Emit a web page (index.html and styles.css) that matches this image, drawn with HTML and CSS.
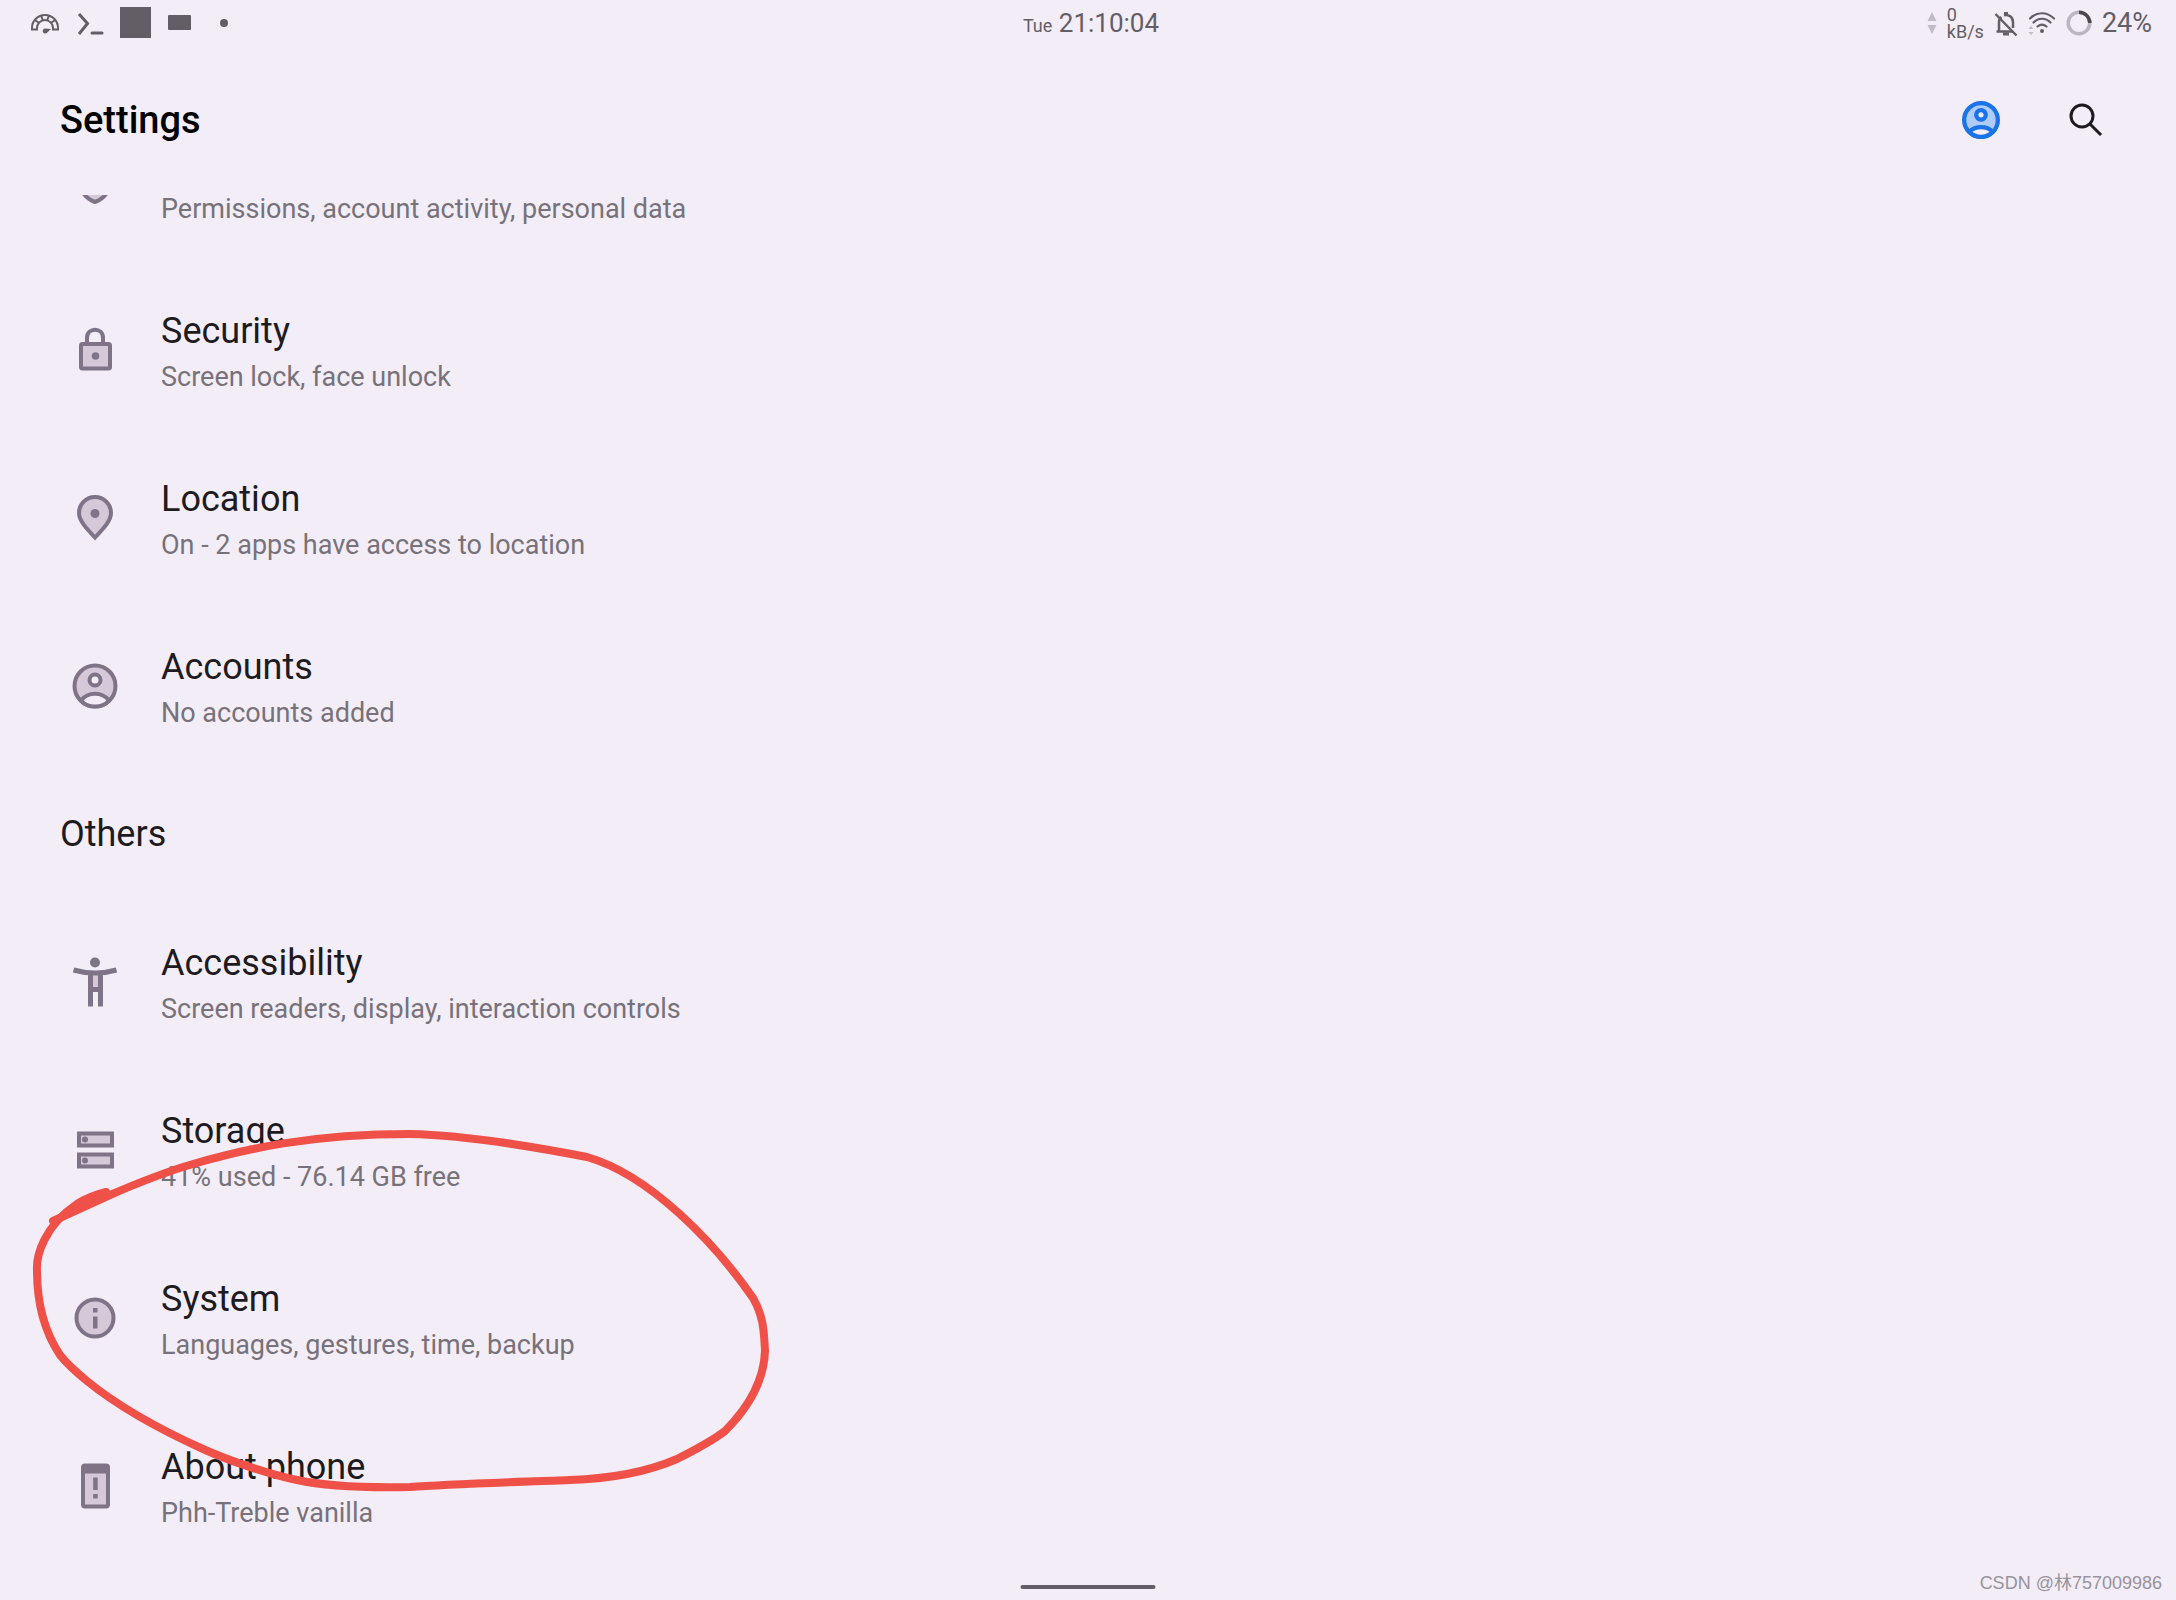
FILE: index.html
```
<!DOCTYPE html>
<html lang="en">

<head>
    <meta charset="UTF-8">
    <meta content="width=device-width, initial-scale=1.0" name="viewport">
    <title>Settings</title>
    <link rel="stylesheet" href="styles.css">
</head>

<body>
<div class="status-bar">
    <div class="status-left">
        <svg width="30" height="32" viewBox="0 0 30 32" fill="none" stroke="currentColor">
            <path d="M2 22.500V21a13 13 0 0 1 26 0v1.500h-5V21a8 8 0 0 0-16 0v1.500z" stroke-width="2"/>
            <path d="M5 13l4 3M11 8.500l2 5M19 8.500l-2 5M25 13l-4 3" stroke-width="2"/>
            <path d="M21 22l-6-.500c-3 .500-3 5 0 5 2 0 3-2 6-4.500z" fill="currentColor" stroke="none"/>
        </svg>
        <svg width="26" height="32" viewBox="0 0 26 32" fill="none" stroke="currentColor">
            <path d="M2 7l8.500 9.500L2 27" stroke-width="3"/>
            <path d="M15 26h10" stroke-width="3" stroke-linecap="round"/>
        </svg>
        <span class="square"></span>
        <span class="block"></span>
        <span class="dot"></span>
    </div>
    <div class="clock"><span class="day">Tue</span> 21:10:04</div>
    <div class="status-right">
        <svg class="faded" width="10" height="32" viewBox="0 0 10 32" fill="currentColor">
            <path d="M5 5l4.500 9h-9zM5 27l4.500-9h-9z"/>
        </svg>
        <div class="speed">0<br>kB/s</div>
        <svg width="24" height="32" viewBox="0 0 24 32" fill="none" stroke="currentColor" stroke-width="2.500">
            <path d="M5 24V15c0-2 1-4 2.500-5M10 8.200c4.500-1.200 9 2 9 6.800v6M2.500 24.500H19"/>
            <path d="M12 5v3" stroke-width="4"/>
            <path d="M9 27h6" stroke-width="3"/>
            <path d="M1.500 7l21 21.500"/>
        </svg>
        <svg width="28" height="32" viewBox="0 0 28 32" fill="none" stroke="currentColor" stroke-width="2.200" stroke-linecap="round">
            <path d="M2 11.500c7-7 17-7 24 0M5.500 15.500c5-5 12-5 17 0M9.500 19.500c3-2.500 6-2.500 9 0"/>
            <circle cx="14" cy="24" r="2" fill="currentColor" stroke="none"/>
            <path class="faded" d="M3 19l2.500 3h-5zM3 28l2.500-3h-5z" fill="currentColor" stroke="none"/>
        </svg>
        <svg class="battery" width="26" height="32" viewBox="0 0 26 32" fill="none" stroke-width="3.500">
            <circle cx="13" cy="16" r="10.800" stroke="#bbb5be"/>
            <path d="M13 5.200A10.800 10.800 0 0 1 23.800 16" stroke="#4b474f"/>
        </svg>
        <span class="percent">24%</span>
    </div>
</div>

<header class="app-bar">
    <h1>Settings</h1>
    <button class="icon-button profile" aria-label="Profile">
        <svg width="38" height="38" viewBox="2 2 44 44">
            <circle cx="24" cy="24" r="19.500" class="tone line"/>
            <circle cx="24" cy="18" r="5.500" class="hole line"/>
            <path d="M10.500 37.500c7-7 20-7 27 0-7 8-20 8-27 0z" class="hole line"/>
        </svg>
    </button>
    <button class="icon-button" aria-label="Search">
        <svg width="34" height="34" viewBox="0 0 34 34" fill="none" stroke="currentColor" stroke-width="3">
            <circle cx="13" cy="13" r="11"/>
            <path d="M21 21l11 11"/>
        </svg>
    </button>
</header>

<main class="settings">
    <a class="item" href="#privacy">
        <svg class="icon" viewBox="0 0 48 48">
            <path d="M24 4l16 6v12c0 10-7 19-16 22C15 41 8 32 8 22V10z" class="tone line"/>
        </svg>
        <span class="text">
            <span class="summary">Permissions, account activity, personal data</span>
        </span>
    </a>
    <a class="item" href="#security">
        <svg class="icon" viewBox="0 0 48 48">
            <path d="M16 18v-6c0-11 16-11 16 0v6" class="line" fill="none"/>
            <rect x="10" y="18" width="29" height="24.500" rx="1.500" class="tone line"/>
            <circle cx="24.500" cy="30" r="3.800" class="solid"/>
        </svg>
        <span class="text">
            <span class="title">Security</span>
            <span class="summary">Screen lock, face unlock</span>
        </span>
    </a>
    <a class="item" href="#location">
        <svg class="icon" viewBox="0 0 48 48">
            <path d="M24 43.500C16 35 8 27 8 19a16 16 0 0 1 32 0c0 8-8 16-16 24.500z" class="tone line"/>
            <circle cx="24" cy="19.500" r="4.500" class="solid"/>
        </svg>
        <span class="text">
            <span class="title">Location</span>
            <span class="summary">On - 2 apps have access to location</span>
        </span>
    </a>
    <a class="item" href="#accounts">
        <svg class="icon" viewBox="0 0 48 48">
            <circle cx="24" cy="24" r="20.500" class="tone line"/>
            <circle cx="24" cy="18" r="5.500" class="hole line"/>
            <path d="M10 38.500c7-9 21-9 28 0-7 8-21 8-28 0z" class="hole line"/>
        </svg>
        <span class="text">
            <span class="title">Accounts</span>
            <span class="summary">No accounts added</span>
        </span>
    </a>

    <h2 class="category">Others</h2>

    <a class="item" href="#accessibility">
        <svg class="icon" viewBox="0 0 48 48">
            <path d="M19 15h11v16H19z" class="tone"/>
            <circle cx="24" cy="4.500" r="5" class="solid"/>
            <path d="M2.500 12c14 4 29 4 43 0M19.500 14v34.500M29.500 14v34.500M19 31.500h11" class="line thick" fill="none"/>
        </svg>
        <span class="text">
            <span class="title">Accessibility</span>
            <span class="summary">Screen readers, display, interaction controls</span>
        </span>
    </a>
    <a class="item" href="#storage">
        <svg class="icon" viewBox="0 0 48 48">
            <rect x="8" y="7.500" width="33" height="12" class="tone line"/>
            <rect x="8" y="28.500" width="33" height="12" class="tone line"/>
            <circle cx="14" cy="13.500" r="3" class="solid"/>
            <circle cx="14" cy="34.500" r="3" class="solid"/>
        </svg>
        <span class="text">
            <span class="title">Storage</span>
            <span class="summary">41% used - 76.14 GB free</span>
        </span>
    </a>
    <a class="item" href="#system">
        <svg class="icon" viewBox="0 0 48 48">
            <circle cx="24" cy="24" r="18.500" class="tone line"/>
            <path d="M22 14h4.500v4.500H22zM22 22.500h4.500v12H22z" class="solid"/>
        </svg>
        <span class="text">
            <span class="title">System</span>
            <span class="summary">Languages, gestures, time, backup</span>
        </span>
    </a>
    <a class="item" href="#about">
        <svg class="icon" viewBox="0 0 48 48">
            <rect x="12" y="3.500" width="25" height="41" rx="2" class="tone line"/>
            <path d="M11 3h27v8.500H11zM22.200 15.500h4.500V28h-4.500zM22.200 32h4.500v4.500h-4.500z" class="solid"/>
        </svg>
        <span class="text">
            <span class="title">About phone</span>
            <span class="summary">Phh-Treble vanilla</span>
        </span>
    </a>

    <!-- hand-drawn circle around System -->
    <svg class="marker" width="760" height="380" viewBox="20 1119 760 380" fill="none">
        <path d="M53 1220L110 1194C140 1181 165 1171 193 1163C245 1148 310 1133 410 1133C460 1134 520 1143 587 1156C650 1174 715 1242 753 1297C764 1316 764 1332 765 1350C764 1378 750 1405 725 1430C712 1440 695 1449 677 1458C640 1474 600 1478 570 1479C520 1481 450 1483 410 1486C360 1487 320 1484 297 1479C270 1474 225 1458 203 1448C150 1424 114 1402 87 1380C76 1371 67 1363 60 1354C48 1336 37 1310 37 1270C36 1255 44 1225 77 1203Q90 1195 106 1191"/>
        <path d="M60 1217L80 1203L104 1194"/>
    </svg>
</main>

<div class="nav-handle"></div>
<div class="watermark">CSDN @林757009986</div>
</body>

</html>
```
FILE: styles.css
```
html, body {
    height: 100%;
    margin: 0;
    padding: 0;
    overflow: hidden;
}

body {
    display: flex;
    flex-direction: column;
    background-color: #f3edf7;
    color: #1d1b20;
    font-family: Roboto, "Noto Sans CJK SC", sans-serif;
}

svg {
    display: block;
    flex: none;
    overflow: visible;
}

.status-bar {
    display: grid;
    grid-template-columns: 1fr auto 1fr;
    align-items: center;
    height: 45px;
    padding: 0 24px 0 30px;
    color: #635e66;
}

.status-left {
    display: flex;
    align-items: center;
    gap: 17px;
}

.square {
    width: 31px;
    height: 31px;
    background-color: currentColor;
}

.block {
    width: 23px;
    height: 15px;
    border-radius: 1px;
    background-color: currentColor;
}

.dot {
    width: 8px;
    height: 8px;
    margin-left: 12px;
    border-radius: 50%;
    background-color: currentColor;
}

.clock {
    font-size: 26px;
}

.day {
    font-size: 18px;
}

.status-right {
    display: flex;
    align-items: center;
    justify-content: flex-end;
    gap: 10px;
}

.speed {
    font-size: 18px;
    line-height: 17px;
}

.faded {
    opacity: .35;
}

.percent {
    font-size: 27px;
}

.app-bar {
    display: flex;
    align-items: center;
    gap: 45px;
    height: 150px;
    padding: 0 60px;
}

.app-bar h1 {
    flex: 1;
    margin: 0;
    color: #000;
    font-size: 38px;
    font-weight: 500;
}

.icon-button {
    display: flex;
    align-items: center;
    justify-content: center;
    width: 60px;
    height: 60px;
    padding: 0;
    border: 0;
    background: none;
    color: #1d1b20;
}

.line {
    stroke: #7f7388;
    stroke-width: 4;
}

.thick {
    stroke-width: 5;
}

.tone {
    fill: #d4c8d9;
}

.solid {
    fill: #7f7388;
}

.hole {
    fill: #f3edf7;
}

.profile .line {
    stroke: #1a73e8;
    stroke-width: 5;
}

.profile .tone {
    fill: #aecbfa;
}

/* list is scrolled to the end, so the first row is cut by the app bar */
.settings {
    position: relative;
    display: flex;
    flex: 1;
    flex-direction: column;
    justify-content: flex-end;
    min-height: 0;
    padding-bottom: 30px;
    overflow: hidden;
}

.item {
    display: flex;
    flex: none;
    align-items: center;
    gap: 31px;
    height: 168px;
    padding: 0 60px;
    color: inherit;
    text-decoration: none;
}

.icon {
    width: 48px;
    height: 48px;
    padding: 0 11px;
}

.text {
    display: flex;
    flex-direction: column;
    justify-content: flex-end;
    gap: 10px;
    box-sizing: border-box;
    min-height: 90px;
    padding: 4px 0;
}

.title {
    font-size: 36px;
    line-height: 44px;
}

.summary {
    color: #77727a;
    font-size: 27px;
    line-height: 28px;
}

.category {
    display: flex;
    flex: none;
    align-items: center;
    height: 128px;
    margin: 0;
    padding: 0 60px;
    font-size: 36px;
    font-weight: 400;
}

.marker {
    position: absolute;
    bottom: 100px;
    left: 20px;
    stroke: #ef5148;
    stroke-width: 8;
    stroke-linecap: round;
    stroke-linejoin: round;
    pointer-events: none;
}

.nav-handle {
    position: absolute;
    bottom: 11px;
    left: 50%;
    width: 135px;
    height: 4px;
    border-radius: 2px;
    background-color: #635e66;
    transform: translateX(-50%);
}

.watermark {
    position: absolute;
    right: 14px;
    bottom: 6px;
    color: #98939c;
    font-family: "Liberation Sans", "Noto Sans CJK SC", sans-serif;
    font-size: 18px;
}
```
